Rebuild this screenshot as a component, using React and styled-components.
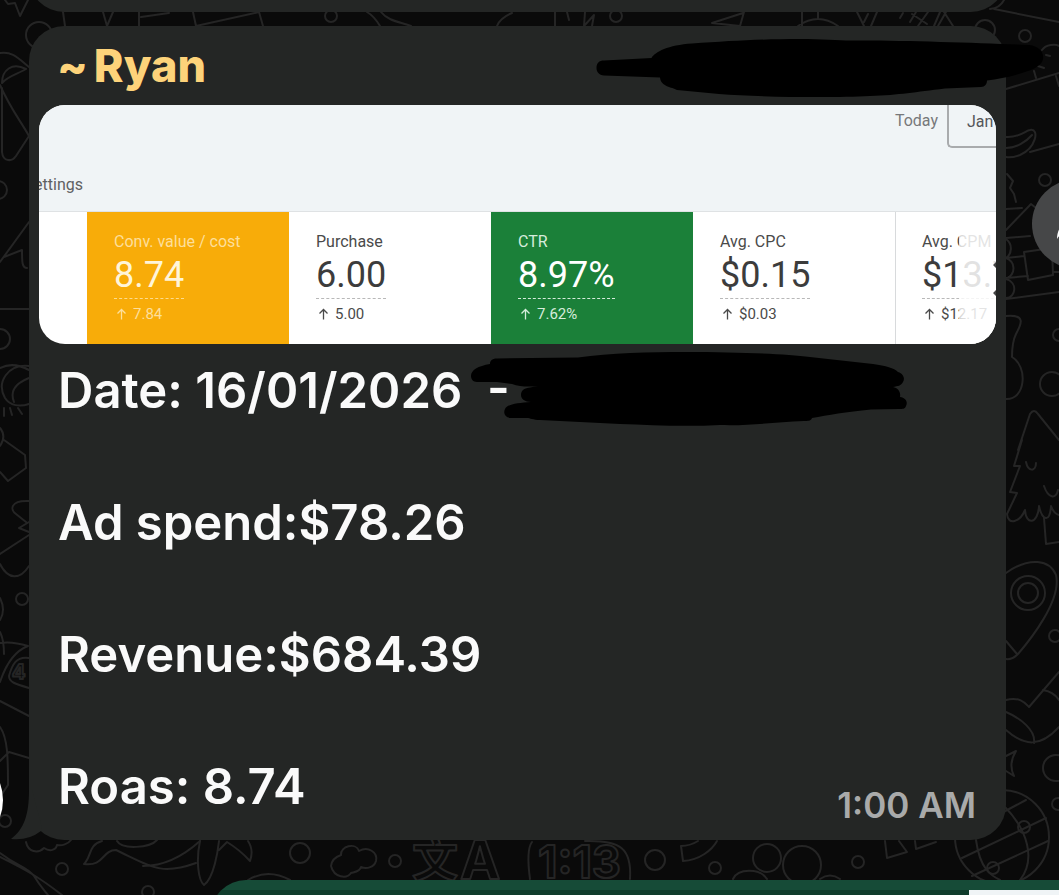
import React from "react";
import styled, { createGlobalStyle } from "styled-components";

const METRICS = [
  { label: "Conv. value / cost", value: "8.74", delta: "7.84", tone: "amber" },
  { label: "Purchase", value: "6.00", delta: "5.00", tone: "plain" },
  { label: "CTR", value: "8.97%", delta: "7.62%", tone: "green" },
  { label: "Avg. CPC", value: "$0.15", delta: "$0.03", tone: "plain" },
  { label: "Avg. CPM", value: "$13.70", delta: "$12.17", tone: "plain", divided: true },
];

const TONES = {
  plain: { bg: "#ffffff", label: "#4a4a4a", value: "#3c3c3c", line: "#b8b8b8" },
  amber: { bg: "#f8ac09", label: "#fddf9b", value: "#fff5d9", line: "#fddc8c" },
  green: { bg: "#1b8039", label: "#d6ecdc", value: "#ffffff", line: "#d6ecdc" },
};

const App = () => {
  return (
    <>
      <GlobalStyle />
      <Chat>
        <Wallpaper />
        <PreviousBubble />
        <Bubble>
          <Header>
            <Sender>
              <span>~</span>
              <span>Ryan</span>
            </Sender>
            <HeaderScribble viewBox="596 38 449 60" aria-hidden="true">
              <path d="M596.500 68C596.500 63 599 60.500 604 60.500L651.500 58C655 52 668 45 692 43.500C730 41 760 39 800 39C820 39 840 40.500 850 40.500C900 40 980 43 1029 45C1039 46 1044 52 1043 59C1042 65 1034 69 1028 71C1014 76 1000 79 987 80.500C987 84 985 87 981 87L945 88.500C915 92 900 95 870 96C830 98 760 97 719 94L677 90C672 87 661 87 660 77.500L604 75.500C599 75 596.500 72 596.500 68Z" />
            </HeaderScribble>
          </Header>
          <Preview />
          <Message>
            <Line>
              Date: 16/01/2026&nbsp; -
              <DateScribble viewBox="470 351 438 76" aria-hidden="true">
                <path d="M471 376C471 370 478 366 490 364C490 360 493 358.500 497 358.500L578 357.500C610 353 650 352 685 352C740 352 785 354 810 357L873 364C886 366 894 368 898 372C904 374 905 379 903 382C901 386 898 386 893 387C898 388 901 392 900 397C906 398 908 402 906 406C905 409 903 409 899 409L871 409.500C846 412 828 415 812 418C811 421 808 421 804 421C775 422 750 426 720 425C685 427 650 425 620 424L540 420C533 420 530 418 527 418L511 418C505 418 503 413 505 409C507 404 518 403 531 402C525 402 521 399 521 395C521 390 525 388 530 387.500L538 386C530 387 520 387 512 384L497 382L477 382C473 382 471 379 471 376Z" />
              </DateScribble>
            </Line>
            <Line>Ad spend:$78.26</Line>
            <Line>Revenue:$684.39</Line>
            <Footer>
              <Line>Roas: 8.74</Line>
              <Time>1:00 AM</Time>
            </Footer>
          </Message>
          <Tail viewBox="10 790 32 50" aria-hidden="true">
            <path d="M29 790C29 815 24 829 11 839Q28 841 41 831L42 828L32 790Z" />
          </Tail>
        </Bubble>
        <NextBubble>
          <NextMedia />
        </NextBubble>
        <Avatar />
        <ForwardButton aria-label="Forward">
          <svg viewBox="0 0 24 24" width="48" height="48" fill="#ffffff">
            <path d="M14 4l8 7.500-8 7.500v-4.500c-5 0-9.500 1-12 5 0-6 4-10.500 12-11z" />
          </svg>
        </ForwardButton>
      </Chat>
    </>
  );
};

const Preview = () => {
  return (
    <PreviewFrame>
      <PreviewTop>
        <Dates>
          <Today>Today</Today>
          <DateButton>Jan</DateButton>
        </Dates>
        <Settings>Settings</Settings>
      </PreviewTop>
      <Cards>
        {METRICS.map((m) => (
          <Card key={m.label} $tone={TONES[m.tone]} $divided={m.divided}>
            <Label $tone={TONES[m.tone]}>{m.label}</Label>
            <Value $tone={TONES[m.tone]}>{m.value}</Value>
            <Delta $tone={TONES[m.tone]}>
              <svg width="11" height="12" viewBox="0 0 11 12" fill="none" stroke="currentColor">
                <path d="M5.500 11.500V1.500M1.500 5.500L5.500 1.500L9.500 5.500" strokeWidth="1.300" />
              </svg>
              {m.delta}
            </Delta>
          </Card>
        ))}
      </Cards>
      <Fade>
        <svg width="4" height="34" viewBox="0 0 4 34" fill="#444444" aria-hidden="true">
          <path d="M4 0V6L1 3ZM4 28V34L1 31Z" />
        </svg>
      </Fade>
    </PreviewFrame>
  );
};

const CIRCLES = [
  [331, 16, 6], [39, 35, 13], [-2, 190, 9], [0, 339, 10], [22, 599, 6], [5, 821, 6],
  [62, 869, 6], [148, 892, 6], [300, 853, 10], [395, 861, 6], [655, 860, 10],
  [715, 868, 6], [767, 858, 14], [802, 865, 19], [858, 862, 6], [1002, 837, 47],
  [1024, 827, 6], [993, 868, 6], [1058, 804, 6], [616, 16, 6], [985, 30, 10],
  [1025, 36, 6], [1045, 180, 6], [1059, 335, 6], [1052, 384, 12], [1028, 593, 17],
  [1028, 593, 10], [1055, 636, 6], [1056, 768, 13],
];

const DOODLES = [
  // strip between the bubbles
  "M63 12L65 26M103 12L107 26L113 12M139 12V26M141 17L169 13M193 12L196 26L259 12L263 26",
  "M367 12Q374 16 380 26M381 12C388 21 400 22 411 26M512 13Q500 18 497 26",
  "M555 12V26M567 12L569 20M585 12L584 26L594 15L592 26M743 13L712 23L740 26L744 12",
  "M802 12V26M818 12V18M798 26Q818 12 838 26M857 12L864 26M868 14L864 22M877 12L871 26",
  "M903 13L900 18M916 12L910 22M912 14L927 24M928 12L918 26M940 12L934 26M946 12L938 26M944 12L953 26",
  // left edge
  "M5 0L8 4L15 3L20 16L28 0M0 53C12 51 18 58 29 67M2 83C2 70 12 62 26 69C18 74 8 76 2 83",
  "M2 88V152C3 162 12 162 16 156L29 136C20 120 10 108 0 85",
  "M0 262L29 222M4 257L22 250C22 262 22 268 27 268M0 309H29",
  "M0 368C8 364 18 364 29 370M29 366C8 364-4 382 5 398C10 406 20 407 29 404M29 378C14 384 10 392 14 402",
  "M4 408V416M10 408L12 415M18 408L22 414M0 428C5 434 4 440 0 446M4 440L25 455L26 468L8 481L0 472",
  "M29 501C10 500 10 510 16 514L26 522M29 522L19 528L29 532M29 535L0 554M0 564C8 580 20 580 29 566",
  "M0 598Q6 610 0 620M0 632Q4 640 4 654M0 643Q12 641 28 646C12 652 4 670 0 682",
  "M29 658C16 656 12 665 9 676C9 682 15 684 29 688M0 701L29 716M0 727C8 738 8 760 8 785L2 794M0 761L9 752L29 758",
  // bottom edge
  "M26 842C28 852 38 854 44 848C50 852 56 850 57 845C62 846 68 844 71 840",
  "M0 853C20 868 26 866 34 876C40 886 44 890 48 895M0 857C30 872 40 878 62 895",
  "M102 841C88 845 92 856 84 864C104 867 102 850 116 850C150 866 160 876 196 863M143 866C170 866 190 850 200 841M117 841C122 850 150 848 157 840",
  "M200 841C196 860 198 880 204 885C214 878 218 850 219 841M219 850L227 842Q240 850 250 861Q254 850 248 841M248 880Q268 868 290 880",
  "M331 866C332 858 338 856 341 855C340 846 356 842 359 851C368 846 378 852 376 861C374 868 366 869 361 867C360 872 354 872 351 873C347 879 334 878 331 866",
  "M532 842Q526 850 530 879M585 841C620 840 632 848 630 879M681 846L683 861C700 860 712 850 717 841M681 846Q690 846 698 841",
  "M733 879C738 868 760 868 767 879M820 879Q830 872 840 879M885 841L887 858L907 852L899 841M915 841L916 849L936 842",
  "M962 858L1046 818M972 876L1048 841M994 817L1026 800M1004 806C1028 830 1036 860 1020 880M976 840C980 870 992 876 1000 880",
  // right edge
  "M994 9L1059 22M1004 0Q1000 8 990 9M1042 50C1046 44 1056 44 1059 46M1046 55L1050 56M1038 66L1044 68M1034 71L1036 78M1006 89L1059 73M1056 76L1059 86",
  "M1006 137C1020 138 1026 130 1030 130C1040 128 1036 148 1020 155Q1012 158 1006 157M1006 148C1016 148 1026 142 1032 135M1030 152L1059 144",
  "M1007 174L1013 181L1010 188L1014 194L1016 202M1006 209L1022 208M1006 230L1031 204L1036 208M1006 238L1030 236",
  "M1006 239C1013 244 1012 254 1006 258C1016 262 1016 274 1006 279C1018 282 1016 298 1006 298M1006 258L1024 256M1024 252L1052 248L1053 275L1028 280ZM1006 278L1028 276M1053 272H1059M1006 299L1059 292",
  "M1006 316C1028 314 1020 326 1016 334C1012 342 1012 350 1012 357C1028 366 1026 400 1006 399",
  "M1018 450L1030 414Q1034 408 1038 414L1059 440M1022 440L1014 466L1020 466L1010 492L1017 493L1007 514C1008 526 1020 522 1025 510C1026 526 1038 524 1039 506C1042 520 1050 524 1051 506Q1054 514 1059 515",
  "M1026 462C1028 472 1036 472 1036 463M1044 486C1048 498 1056 500 1058 490M1044 518L1046 544L1059 542",
  "M1006 573C1030 556 1050 560 1056 575C1062 600 1030 640 1018 654Q1012 660 1006 659M1006 641L1017 654",
  "M1006 700C1020 696 1026 704 1029 707L1059 672M1043 690Q1054 692 1059 700M1006 712C1020 718 1036 730 1034 743M1006 730C1024 746 1040 748 1059 727",
  "M1006 756L1016 751Q1008 764 1014 776L1006 771",
];

const Wallpaper = () => {
  return (
    <WallpaperSvg width="1059" height="895" viewBox="0 0 1059 895" aria-hidden="true">
      {DOODLES.map((d) => (
        <path key={d} d={d} />
      ))}
      {CIRCLES.map(([x, y, r]) => (
        <circle key={`${x}-${y}-${r}`} cx={x} cy={y} r={r} />
      ))}
      <text x="12" y="679" fontSize="20">4</text>
      <text x="412" y="876" fontSize="46">文</text>
      <text x="460" y="879" fontSize="54">A</text>
      <text x="538" y="878" fontSize="45">1:13</text>
    </WallpaperSvg>
  );
};

const GlobalStyle = createGlobalStyle`
  * {
    box-sizing: border-box;
  }

  body {
    margin: 0;
    background: #0a0a0a;
  }
`;

const Chat = styled.main`
  position: relative;
  min-height: 100vh;
  overflow: hidden;
  display: flex;
  flex-direction: column;
  background: #0a0a0a;
  font-family: Inter, "Liberation Sans", sans-serif;
`;

const WallpaperSvg = styled.svg`
  position: absolute;
  top: 0;
  left: 0;
  fill: none;
  stroke: #252525;
  stroke-width: 2;
  stroke-linecap: round;
  stroke-linejoin: round;

  text {
    font-family: Inter, "Noto Sans CJK SC", sans-serif;
    font-weight: 700;
  }
`;

const PreviousBubble = styled.div`
  position: relative;
  height: 80px;
  margin: -68px 53px 14px 29px;
  border-radius: 35px;
  background: #242625;
`;

const Bubble = styled.article`
  position: relative;
  margin: 0 53px 40px 29px;
  padding: 0 10px 20px;
  border-radius: 35px;
  background: #242625;
  color: #fafafa;
`;

const Header = styled.header`
  position: relative;
  display: flex;
  height: 79px;
  padding: 12px 18px;
`;

const Sender = styled.h2`
  display: flex;
  gap: 6px;
  margin: 0;
  color: #fdd37a;
  font-size: 45px;
  line-height: 56px;
  font-weight: 800;
`;

const HeaderScribble = styled.svg`
  position: absolute;
  top: 12px;
  right: -49px;
  width: 449px;
  height: 60px;
  z-index: 1;
`;

const PreviewFrame = styled.section`
  position: relative;
  overflow: hidden;
  border-radius: 26px;
  background: #ffffff;
  font-family: Roboto, "Liberation Sans", sans-serif;
  font-size: 16px;
  line-height: 20px;
`;

const PreviewTop = styled.div`
  display: flex;
  flex-direction: column;
  justify-content: space-between;
  height: 107px;
  padding-bottom: 16px;
  border-bottom: 1px solid #dfe2e4;
  background: #f0f4f6;
  color: #5f6062;
`;

const Dates = styled.div`
  display: flex;
  justify-content: flex-end;
  gap: 9px;
`;

const Today = styled.span`
  padding-top: 6px;
  color: #77787a;
`;

const DateButton = styled.button`
  width: 49px;
  height: 43px;
  padding: 0 0 8px 18px;
  border: solid #a9abad;
  border-width: 0 0 2px 2px;
  border-radius: 0 0 0 5px;
  background: transparent;
  color: #55565a;
  font: inherit;
  text-align: left;
`;

const Settings = styled.div`
  display: flex;
  justify-content: flex-end;
  width: 44px;
`;

const Cards = styled.div`
  display: flex;
  height: 132px;
  padding-left: 48px;
`;

const Card = styled.div`
  display: flex;
  flex-direction: column;
  align-items: flex-start;
  flex: 0 0 202px;
  padding: 20px 0 0 27px;
  background: ${(p) => p.$tone.bg};
  box-shadow: ${(p) => (p.$divided ? "inset 1px 0 #d8dadc" : "none")};
`;

const Label = styled.span`
  color: ${(p) => p.$tone.label};
`;

const Value = styled.strong`
  height: 47px;
  border-bottom: 1px dashed ${(p) => p.$tone.line};
  color: ${(p) => p.$tone.value};
  font-size: 36px;
  line-height: 46px;
  font-weight: 400;
`;

const Delta = styled.span`
  display: flex;
  align-items: center;
  gap: 6px;
  padding: 5px 0 0 2px;
  color: ${(p) => p.$tone.label};
  font-size: 15px;
`;

const Fade = styled.div`
  position: absolute;
  right: 0;
  bottom: 0;
  display: flex;
  justify-content: flex-end;
  align-items: center;
  width: 37px;
  height: 130px;
  background: linear-gradient(90deg, rgba(255, 255, 255, 0.75), rgba(255, 255, 255, 0.85) 20%);
`;

const Message = styled.div`
  display: flex;
  flex-direction: column;
  gap: 66px;
  padding: 14px 20px 0 19px;
`;

const Line = styled.p`
  position: relative;
  margin: 0;
  font-size: 49px;
  line-height: 66px;
  font-weight: 600;
`;

const DateScribble = styled.svg`
  position: absolute;
  top: -7px;
  left: 412px;
  width: 438px;
  height: 76px;
`;

const Footer = styled.div`
  display: flex;
  justify-content: space-between;
  align-items: flex-end;
`;

const Time = styled.time`
  color: #a9aaaa;
  font-size: 35px;
  line-height: 30px;
  font-weight: 600;
`;

const Tail = styled.svg`
  position: absolute;
  left: -19px;
  bottom: 0;
  width: 32px;
  height: 50px;
  fill: #242625;
`;

const NextBubble = styled.div`
  position: relative;
  flex: 0 0 80px;
  display: flex;
  justify-content: flex-end;
  margin: 0 0 -65px 211px;
  padding-top: 10px;
  border-top-left-radius: 35px;
  background: linear-gradient(#164b37 10px, #103c2c 10px);
`;

const NextMedia = styled.div`
  width: 90px;
  background: #f0f4f6;
`;

const Avatar = styled.div`
  position: absolute;
  top: 750px;
  left: -97px;
  width: 100px;
  height: 100px;
  border-radius: 50%;
  background: #ffffff;
`;

const ForwardButton = styled.button`
  position: absolute;
  top: 179px;
  right: -63px;
  display: flex;
  align-items: center;
  justify-content: center;
  width: 90px;
  height: 90px;
  padding: 0;
  border: 0;
  border-radius: 50%;
  background: #464748;
`;

export default App;
